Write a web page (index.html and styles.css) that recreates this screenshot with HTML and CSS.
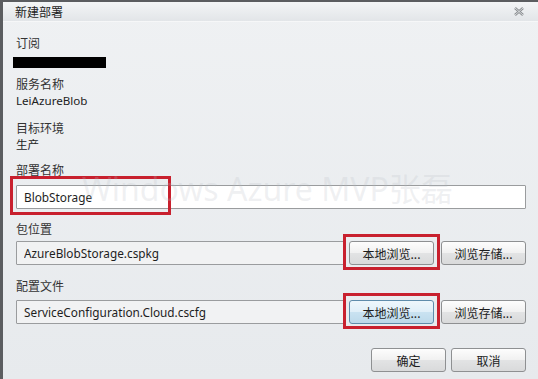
FILE: index.html
```html
<!DOCTYPE html>
<html>
<head>
  <meta charset="utf-8">
  <title>新建部署</title>
  <link rel="stylesheet" href="styles.css">
</head>
<body>
  <div class="dialog">
    <div class="title-bar">
      <span class="title">新建部署</span>
      <svg class="close-icon" width="10" height="9" viewBox="0 0 10 9">
        <path d="M1 1 L9 8 M9 1 L1 8" stroke="#8a8d90" stroke-width="2.4" fill="none"/>
        <path d="M1 1 L9 8 M9 1 L1 8" stroke="#e9ecee" stroke-width="0.8" fill="none"/>
      </svg>
    </div>

    <div class="content">
      <div class="label first">订阅</div>
      <div class="redacted"></div>

      <div class="label gap">服务名称</div>
      <div class="value">LeiAzureBlob</div>

      <div class="label gap-lg">目标环境</div>
      <div class="value">生产</div>

      <div class="label gap-md">部署名称</div>
      <div class="name-field">
        <input type="text" class="text-input" value="BlobStorage">
        <span class="mark-box"></span>
      </div>

      <div class="label gap-row">包位置</div>
      <div class="file-row first-row">
        <input type="text" class="text-input readonly" value="AzureBlobStorage.cspkg" readonly>
        <button type="button" class="btn marked">本地浏览...</button>
        <button type="button" class="btn">浏览存储...</button>
      </div>

      <div class="label gap-row2">配置文件</div>
      <div class="file-row second-row">
        <input type="text" class="text-input readonly" value="ServiceConfiguration.Cloud.cscfg" readonly>
        <button type="button" class="btn marked active">本地浏览...</button>
        <button type="button" class="btn">浏览存储...</button>
      </div>

      <div class="actions">
        <button type="button" class="btn action">确定</button>
        <button type="button" class="btn action">取消</button>
      </div>
    </div>

    <div class="watermark">Windows Azure MVP张磊</div>
  </div>
</body>
</html>
```

FILE: styles.css
```css
body {
  margin: 0;
  width: 538px;
  height: 379px;
  overflow: hidden;
  background-color: #5b5d60;
  font-family: 'Noto Sans', 'Noto Sans CJK SC', sans-serif;
  font-size: 12px;
  color: #2b2b2b;
}

.dialog {
  position: relative;
  margin: 2px 0 0 3px;
  height: 377px;
  background: linear-gradient(#eff1f3, #e7eaed);
}

.title-bar {
  height: 19px;
  display: flex;
  align-items: center;
  justify-content: space-between;
  padding: 0 14px 0 12px;
  background: linear-gradient(#f3f5f6, #e2e5e8);
  border-bottom: 1px solid #f6f7f8;
}

.title {
  font-size: 12px;
  color: #222;
}

.close-icon {
  display: block;
}

.content {
  padding: 0 12px 0 13px;
}

.label {
  line-height: 16px;
  color: #333;
}

.label.first {
  padding-top: 14px;
}

.label.gap {
  margin-top: 9px;
}

.label.gap-lg {
  margin-top: 12px;
}

.label.gap-md {
  margin-top: 10px;
}

.label.gap-row {
  margin-top: 13px;
}

.label.gap-row2 {
  margin-top: 14px;
}

.value {
  line-height: 16px;
  color: #222;
  font-size: 11.6px;
}

.redacted {
  width: 93px;
  height: 11px;
  margin: 5px 0 0 -3px;
  background-color: #000;
}

.name-field {
  position: relative;
  margin-top: 6px;
}

.text-input {
  display: block;
  width: 100%;
  height: 24px;
  box-sizing: border-box;
  margin: 0;
  padding: 0 7px;
  border: 1px solid #9a9c9e;
  border-radius: 1px;
  background-color: #fff;
  font-family: 'Noto Sans', 'Noto Sans CJK SC', sans-serif;
  font-size: 11.8px;
  color: #1e1e1e;
}

.text-input.readonly {
  background-color: #f1f2f3;
}

.mark-box {
  position: absolute;
  left: -6px;
  top: -9px;
  width: 155px;
  height: 33px;
  border: 3px solid #c8202e;
}

.file-row {
  display: flex;
  align-items: center;
}

.first-row {
  margin-top: 3px;
}

.second-row {
  margin-top: 5px;
}

.file-row .text-input {
  flex: 1;
  margin-right: 3px;
}

.btn {
  position: relative;
  flex: none;
  width: 85px;
  height: 24px;
  margin: 0;
  padding: 0;
  border: 1px solid #8e9092;
  border-radius: 3px;
  background: linear-gradient(#fdfdfd 0%, #f1f1f1 48%, #e2e3e4 52%, #d9dadb 100%);
  font-family: 'Noto Sans CJK SC', 'Noto Sans', sans-serif;
  font-size: 12px;
  color: #1c1c1c;
}

.btn + .btn {
  margin-left: 7px;
}

.btn.marked::after {
  content: "";
  position: absolute;
  left: -7px;
  top: -8px;
  right: -7px;
  bottom: -6px;
  border: 3px solid #c8202e;
}

.btn.active {
  border-color: #5f8cab;
  background: linear-gradient(#eef7fc 0%, #e0eff8 48%, #c9e2f1 52%, #bcd9ea 100%);
}

.actions {
  display: flex;
  justify-content: flex-end;
  margin-top: 24px;
}

.btn.action {
  width: 75px;
  height: 24px;
}

.btn.action + .btn.action {
  margin-left: 5px;
}

.watermark {
  position: absolute;
  left: 79px;
  top: 162px;
  font-family: 'Noto Sans', 'Noto Sans CJK SC', sans-serif;
  font-size: 32px;
  color: rgba(185, 190, 196, 0.22);
  white-space: nowrap;
  pointer-events: none;
}
```
